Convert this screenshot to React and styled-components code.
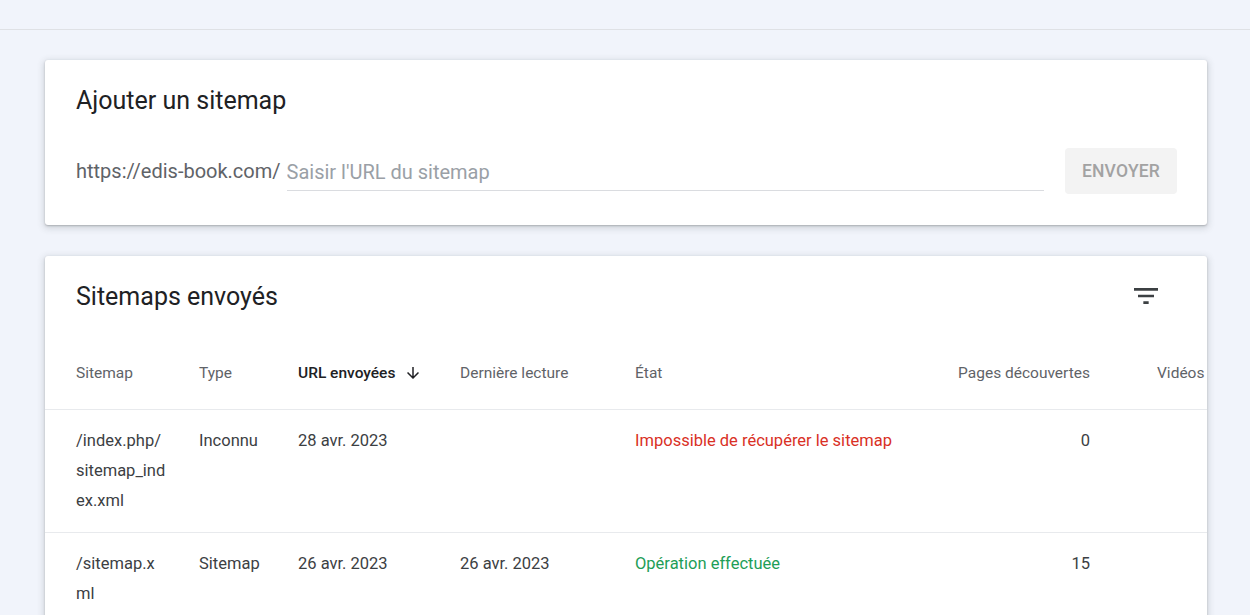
import React from "react";
import styled, { createGlobalStyle } from "styled-components";

const Global = createGlobalStyle`
  html, body { margin: 0; padding: 0; background: #f1f4fb; }
  body { font-family: Roboto, "Liberation Sans", Arial, sans-serif; color: #202124; }
  * { box-sizing: border-box; }
`;

const Page = styled.div`
  min-height: 615px;
  background: #f1f4fb;
  overflow: hidden;
`;

const TopBar = styled.div`
  height: 30px;
  border-bottom: 1px solid #dfe1e5;
`;

const Main = styled.main`
  display: flex;
  flex-direction: column;
  gap: 31px;
  padding: 30px 43px 0 45px;
`;

const Card = styled.section`
  background: #fff;
  border-radius: 3px;
  box-shadow: 0 1px 2px rgba(60, 64, 67, 0.3), 0 2px 6px 2px rgba(60, 64, 67, 0.15);
  overflow: hidden;
`;

const AddCard = styled(Card)`
  padding: 26px 30px 31px 31px;
`;

const Title = styled.h2`
  margin: 0;
  font-size: 25px;
  line-height: 30px;
  font-weight: 400;
  color: #202124;
`;

const UrlRow = styled.div`
  display: flex;
  align-items: center;
  margin-top: 32px;
  height: 46px;
`;

const Prefix = styled.span`
  font-size: 20px;
  color: #5f6368;
  margin-right: 6px;
  white-space: nowrap;
`;

const Input = styled.input`
  flex: 1;
  height: 34px;
  margin-top: 6px;
  border: none;
  border-bottom: 1px solid #dadce0;
  outline: none;
  font-family: Roboto, "Liberation Sans", Arial, sans-serif;
  font-size: 20px;
  color: #202124;
  padding: 0 0 4px 0;
  background: transparent;
  &::placeholder { color: #9aa0a6; }
`;

const SubmitButton = styled.button`
  margin-left: 21px;
  height: 46px;
  width: 112px;
  border: none;
  border-radius: 4px;
  background: #f3f3f3;
  color: #a2a2a2;
  font-family: Roboto, "Liberation Sans", Arial, sans-serif;
  font-size: 17.5px;
  font-weight: 500;
  letter-spacing: 0.2px;
  padding: 0;
`;

const ListHeader = styled.div`
  display: flex;
  align-items: center;
  justify-content: space-between;
  padding: 26px 37px 0 31px;
  height: 56px;
`;

const IconButton = styled.button`
  width: 48px;
  height: 48px;
  margin: -10px 0 -8px;
  padding: 8px;
  border: none;
  background: transparent;
  display: flex;
  align-items: center;
  justify-content: center;
  color: #3c4043;
`;

const Table = styled.div`
  width: 1300px;
`;

const Row = styled.div`
  display: grid;
  grid-template-columns: 123px 99px 162px 175px 295px 160px 170px;
  padding-left: 31px;
  border-bottom: 1px solid #e8eaed;
  align-items: start;
`;

const HeadCell = styled.div`
  padding: 51px 0 26px;
  font-size: 15.5px;
  line-height: 20px;
  color: ${(p) => (p.$active ? "#202124" : "#5f6368")};
  font-weight: ${(p) => (p.$active ? 500 : 400)};
  padding-left: ${(p) => p.$pl || 0}px;
  display: flex;
  align-items: center;
  justify-content: ${(p) => (p.$right ? "flex-end" : "flex-start")};
  gap: 9px;
  white-space: nowrap;
`;

const Cell = styled.div`
  padding: 16px 0 16px;
  font-size: 16.5px;
  line-height: 30px;
  color: ${(p) => p.$color || "#3c4043"};
  text-align: ${(p) => (p.$right ? "right" : "left")};
  padding-left: ${(p) => p.$pl || 0}px;
`;

const PathCell = styled(Cell)`
  width: 91px;
  word-break: break-all;
`;

const FilterIcon = () => (
  <svg width="32" height="32" viewBox="0 0 24 24" fill="currentColor">
    <path d="M10 18h4v-2h-4v2zM3 6v2h18V6H3zm3 7h12v-2H6v2z" />
  </svg>
);

const ArrowDown = () => (
  <svg width="18" height="18" viewBox="0 0 24 24" fill="#202124">
    <path d="M20 12l-1.41-1.41L13 16.17V4h-2v12.17l-5.58-5.59L4 12l8 8 8-8z" />
  </svg>
);

const rows = [
  {
    path: "/index.php/sitemap_index.xml",
    type: "Inconnu",
    sent: "28 avr. 2023",
    read: "",
    state: "Impossible de récupérer le sitemap",
    color: "#d93025",
    pages: "0",
  },
  {
    path: "/sitemap.xml",
    type: "Sitemap",
    sent: "26 avr. 2023",
    read: "26 avr. 2023",
    state: "Opération effectuée",
    color: "#1e9e57",
    pages: "15",
  },
];

export default function App() {
  return (
    <Page>
      <Global />
      <TopBar />
      <Main>
        <AddCard>
          <Title>Ajouter un sitemap</Title>
          <UrlRow>
            <Prefix>https://edis-book.com/</Prefix>
            <Input placeholder="Saisir l'URL du sitemap" />
            <SubmitButton>ENVOYER</SubmitButton>
          </UrlRow>
        </AddCard>
        <Card>
          <ListHeader>
            <Title>Sitemaps envoyés</Title>
            <IconButton aria-label="Filtrer">
              <FilterIcon />
            </IconButton>
          </ListHeader>
          <Table>
            <Row>
              <HeadCell>Sitemap</HeadCell>
              <HeadCell>Type</HeadCell>
              <HeadCell $active>
                URL envoyées <ArrowDown />
              </HeadCell>
              <HeadCell>Dernière lecture</HeadCell>
              <HeadCell>État</HeadCell>
              <HeadCell $right>Pages découvertes</HeadCell>
              <HeadCell $pl={67}>Vidéos</HeadCell>
            </Row>
            {rows.map((r) => (
              <Row key={r.path}>
                <PathCell>{r.path}</PathCell>
                <Cell>{r.type}</Cell>
                <Cell>{r.sent}</Cell>
                <Cell>{r.read}</Cell>
                <Cell $color={r.color}>{r.state}</Cell>
                <Cell $right>{r.pages}</Cell>
                <Cell $pl={67}></Cell>
              </Row>
            ))}
          </Table>
        </Card>
      </Main>
    </Page>
  );
}
